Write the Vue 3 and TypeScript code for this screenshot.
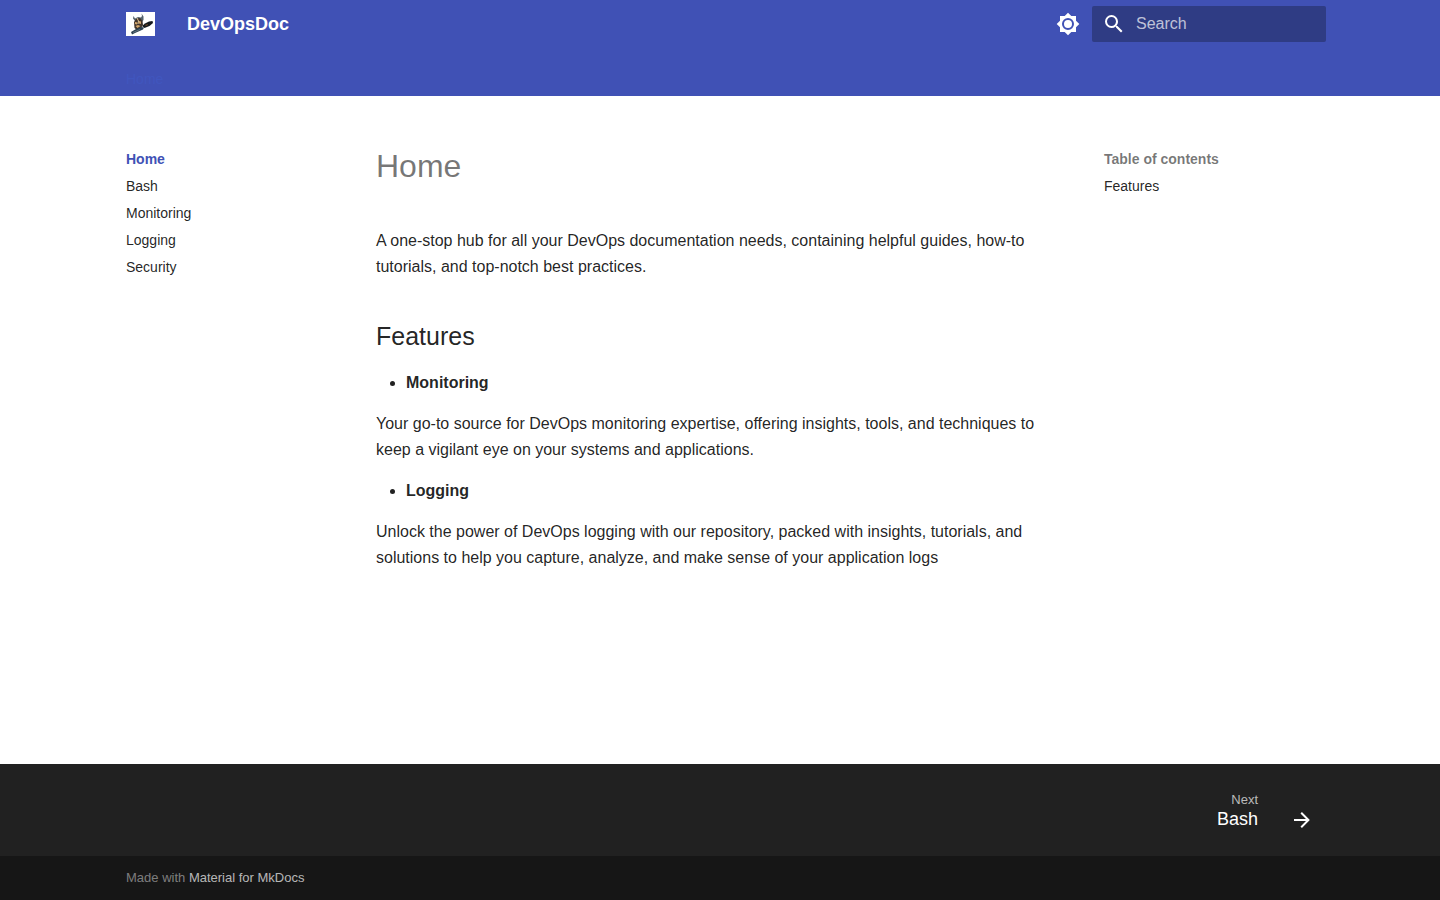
<script setup lang="ts">
import { ref } from 'vue'

const query = ref('')
const pages: string[] = ['Home', 'Bash', 'Monitoring', 'Logging', 'Security']
const features: { name: string; text: string }[] = [
  {
    name: 'Monitoring',
    text: 'Your go-to source for DevOps monitoring expertise, offering insights, tools, and techniques to keep a vigilant eye on your systems and applications.',
  },
  {
    name: 'Logging',
    text: 'Unlock the power of DevOps logging with our repository, packed with insights, tutorials, and solutions to help you capture, analyze, and make sense of your application logs',
  },
]
</script>

<template>
  <div class="page">
    <header class="header">
      <div class="grid bar">
        <a href="#" class="logo" aria-label="DevOpsDoc">
          <svg viewBox="0 0 29 24" width="29" height="24" aria-hidden="true">
            <rect width="29" height="24" fill="#fff" />
            <path d="M9 9 7 6.500 7.500 4l1.500 2.500L12 5l3 .5L16 4l-.5-2.500 2 3L17.500 8l-1.500 2-6 .5z" fill="#55636d" />
            <path d="m8 10 2-3 4-1 2.500 3 .5 4-2 3-4 2-2.500-2z" fill="#40332a" />
            <path d="m9 10 2.500.5-.5 2-2-.5zm4-1 2 .5v2.500l-2-.5zM9.500 14l2.500-1 2.500 1-3 2z" fill="#d1a56b" />
            <path d="m11 6 1.500 3-.5 3" stroke="#e0c394" fill="none" />
            <path d="m16 14 3-2.500 4-2 3.500-.5.5 2-3.500 3-5 2z" fill="#15191c" />
            <path d="m19 13 2.500-1 .5 1-2 1z" fill="#6e4929" />
            <path d="m5 20 5-3 5-2 3 .5-1 2-8 3.500-3 1.500z" fill="#2b4050" />
            <path d="m7 20.500 7-3" stroke="#60727e" />
          </svg>
        </a>
        <strong class="title">DevOpsDoc</strong>
        <button type="button" class="theme" aria-label="Switch to dark mode">
          <svg viewBox="0 0 24 24" width="24" height="24" aria-hidden="true">
            <path d="M12 8a4 4 0 0 0-4 4 4 4 0 0 0 4 4 4 4 0 0 0 4-4 4 4 0 0 0-4-4m0 10a6 6 0 0 1-6-6 6 6 0 0 1 6-6 6 6 0 0 1 6 6 6 6 0 0 1-6 6m8-9.310V4h-4.690L12 .690 8.690 4H4v4.690L.690 12 4 15.310V20h4.690L12 23.310 15.310 20H20v-4.690L23.310 12z" />
          </svg>
        </button>
        <label class="search">
          <svg viewBox="0 0 24 24" width="24" height="24" aria-hidden="true">
            <path d="M9.500 3A6.500 6.500 0 0 1 16 9.500c0 1.610-.590 3.090-1.560 4.230l.270.270h.790l5 5-1.500 1.500-5-5v-.790l-.270-.270A6.520 6.520 0 0 1 9.500 16 6.500 6.500 0 0 1 3 9.500 6.500 6.500 0 0 1 9.500 3m0 2C7 5 5 7 5 9.500S7 14 9.500 14 14 12 14 9.500 12 5 9.500 5" />
          </svg>
          <input v-model="query" type="text" placeholder="Search" aria-label="Search" />
        </label>
      </div>
      <nav class="grid tabs" aria-label="Tabs"><a href="#">Home</a></nav>
    </header>

    <main class="grid main">
      <nav class="side" aria-label="Navigation">
        <a v-for="(page, i) in pages" :key="page" href="#" :class="{ active: i === 0 }">{{ page }}</a>
      </nav>
      <article class="content">
        <h1>Home</h1>
        <p>A one-stop hub for all your DevOps documentation needs, containing helpful guides, how-to tutorials, and top-notch best practices.</p>
        <h2 id="features">Features</h2>
        <template v-for="feature in features" :key="feature.name">
          <ul><li><strong>{{ feature.name }}</strong></li></ul>
          <p>{{ feature.text }}</p>
        </template>
      </article>
      <nav class="side toc" aria-label="Table of contents">
        <span class="toc-title">Table of contents</span>
        <a href="#features">Features</a>
      </nav>
    </main>

    <footer>
      <div class="footer-nav">
        <div class="grid">
          <a href="#" class="next">
            <span class="next-text"><small>Next</small><span>Bash</span></span>
            <svg viewBox="0 0 24 24" width="24" height="24" aria-hidden="true">
              <path d="M4 11v2h12l-5.500 5.500 1.420 1.420L19.840 12l-7.920-7.920L10.500 5.500 16 11z" />
            </svg>
          </a>
        </div>
      </div>
      <div class="meta">
        <div class="grid">Made with <a href="#">Material for MkDocs</a></div>
      </div>
    </footer>
  </div>
</template>

<style>
body {
  margin: 0;
  background: #fff;
}
</style>

<style scoped>
.page {
  display: flex;
  flex-direction: column;
  min-height: 100vh;
  font-family: "Liberation Sans", Arial, sans-serif;
  font-size: 16px;
  line-height: 26px;
  color: rgba(0, 0, 0, 0.87);
}
a {
  color: inherit;
  text-decoration: none;
}
svg {
  display: block;
  fill: currentColor;
}
.grid {
  box-sizing: border-box;
  width: 100%;
  max-width: 1220px;
  margin: 0 auto;
  padding: 0 16px;
}
.header {
  background: #4051b5;
  color: #fff;
}
.bar {
  display: flex;
  align-items: center;
  height: 48px;
  padding-right: 4px;
}
.title {
  flex: 1;
  margin-left: 32px;
  font-size: 18px;
}
.theme {
  padding: 0;
  margin-right: 12px;
  border: 0;
  background: none;
  color: inherit;
  cursor: pointer;
}
.search {
  box-sizing: border-box;
  display: flex;
  align-items: center;
  gap: 10px;
  width: 234px;
  height: 36px;
  padding: 0 10px;
  border-radius: 2px;
  background: #2f3c84;
}
.search svg {
  flex: none;
}
.search input {
  flex: 1;
  min-width: 0;
  padding: 0;
  border: 0;
  outline: 0;
  background: none;
  color: #fff;
  font: inherit;
}
.search input::placeholder {
  color: rgba(255, 255, 255, 0.7);
  opacity: 1;
}
.tabs {
  height: 48px;
  padding-top: 18px;
  font-size: 14px;
}
.tabs a {
  color: #4056be;
}
.main {
  flex: 1;
  display: flex;
  align-items: flex-start;
  padding-top: 54px;
}
.side {
  display: flex;
  flex: none;
  flex-direction: column;
  gap: 9px;
  width: 226px;
  font-size: 14px;
  line-height: 18px;
}
.side .active {
  color: #4051b5;
  font-weight: 700;
}
.toc {
  width: 210px;
}
.toc-title {
  color: rgba(0, 0, 0, 0.54);
  font-weight: 700;
}
.content {
  flex: 1;
  min-width: 0;
  padding: 0 44px 0 24px;
}
h1 {
  margin: -4px 0 42px;
  color: rgba(0, 0, 0, 0.54);
  font-size: 32px;
  font-weight: 400;
  line-height: 40px;
}
h2 {
  margin: 39px 0 16px;
  font-size: 25px;
  font-weight: 400;
  line-height: 35px;
}
p,
ul {
  margin: 15px 0;
}
ul {
  padding-left: 30px;
}
.footer-nav {
  background: #212121;
  color: #fff;
}
.footer-nav .grid {
  display: flex;
  justify-content: flex-end;
}
.next {
  display: flex;
  align-items: flex-end;
  gap: 32px;
  padding: 28px 0 24px;
}
.next-text {
  display: flex;
  flex-direction: column;
  align-items: flex-end;
  padding-bottom: 2px;
  font-size: 18px;
  line-height: 22px;
}
.next small {
  color: rgba(255, 255, 255, 0.7);
  font-size: 13px;
  line-height: 16px;
}
.meta {
  padding: 9px 0;
  background: #161616;
  color: rgba(255, 255, 255, 0.45);
  font-size: 13px;
}
.meta a {
  color: rgba(255, 255, 255, 0.7);
}
</style>
